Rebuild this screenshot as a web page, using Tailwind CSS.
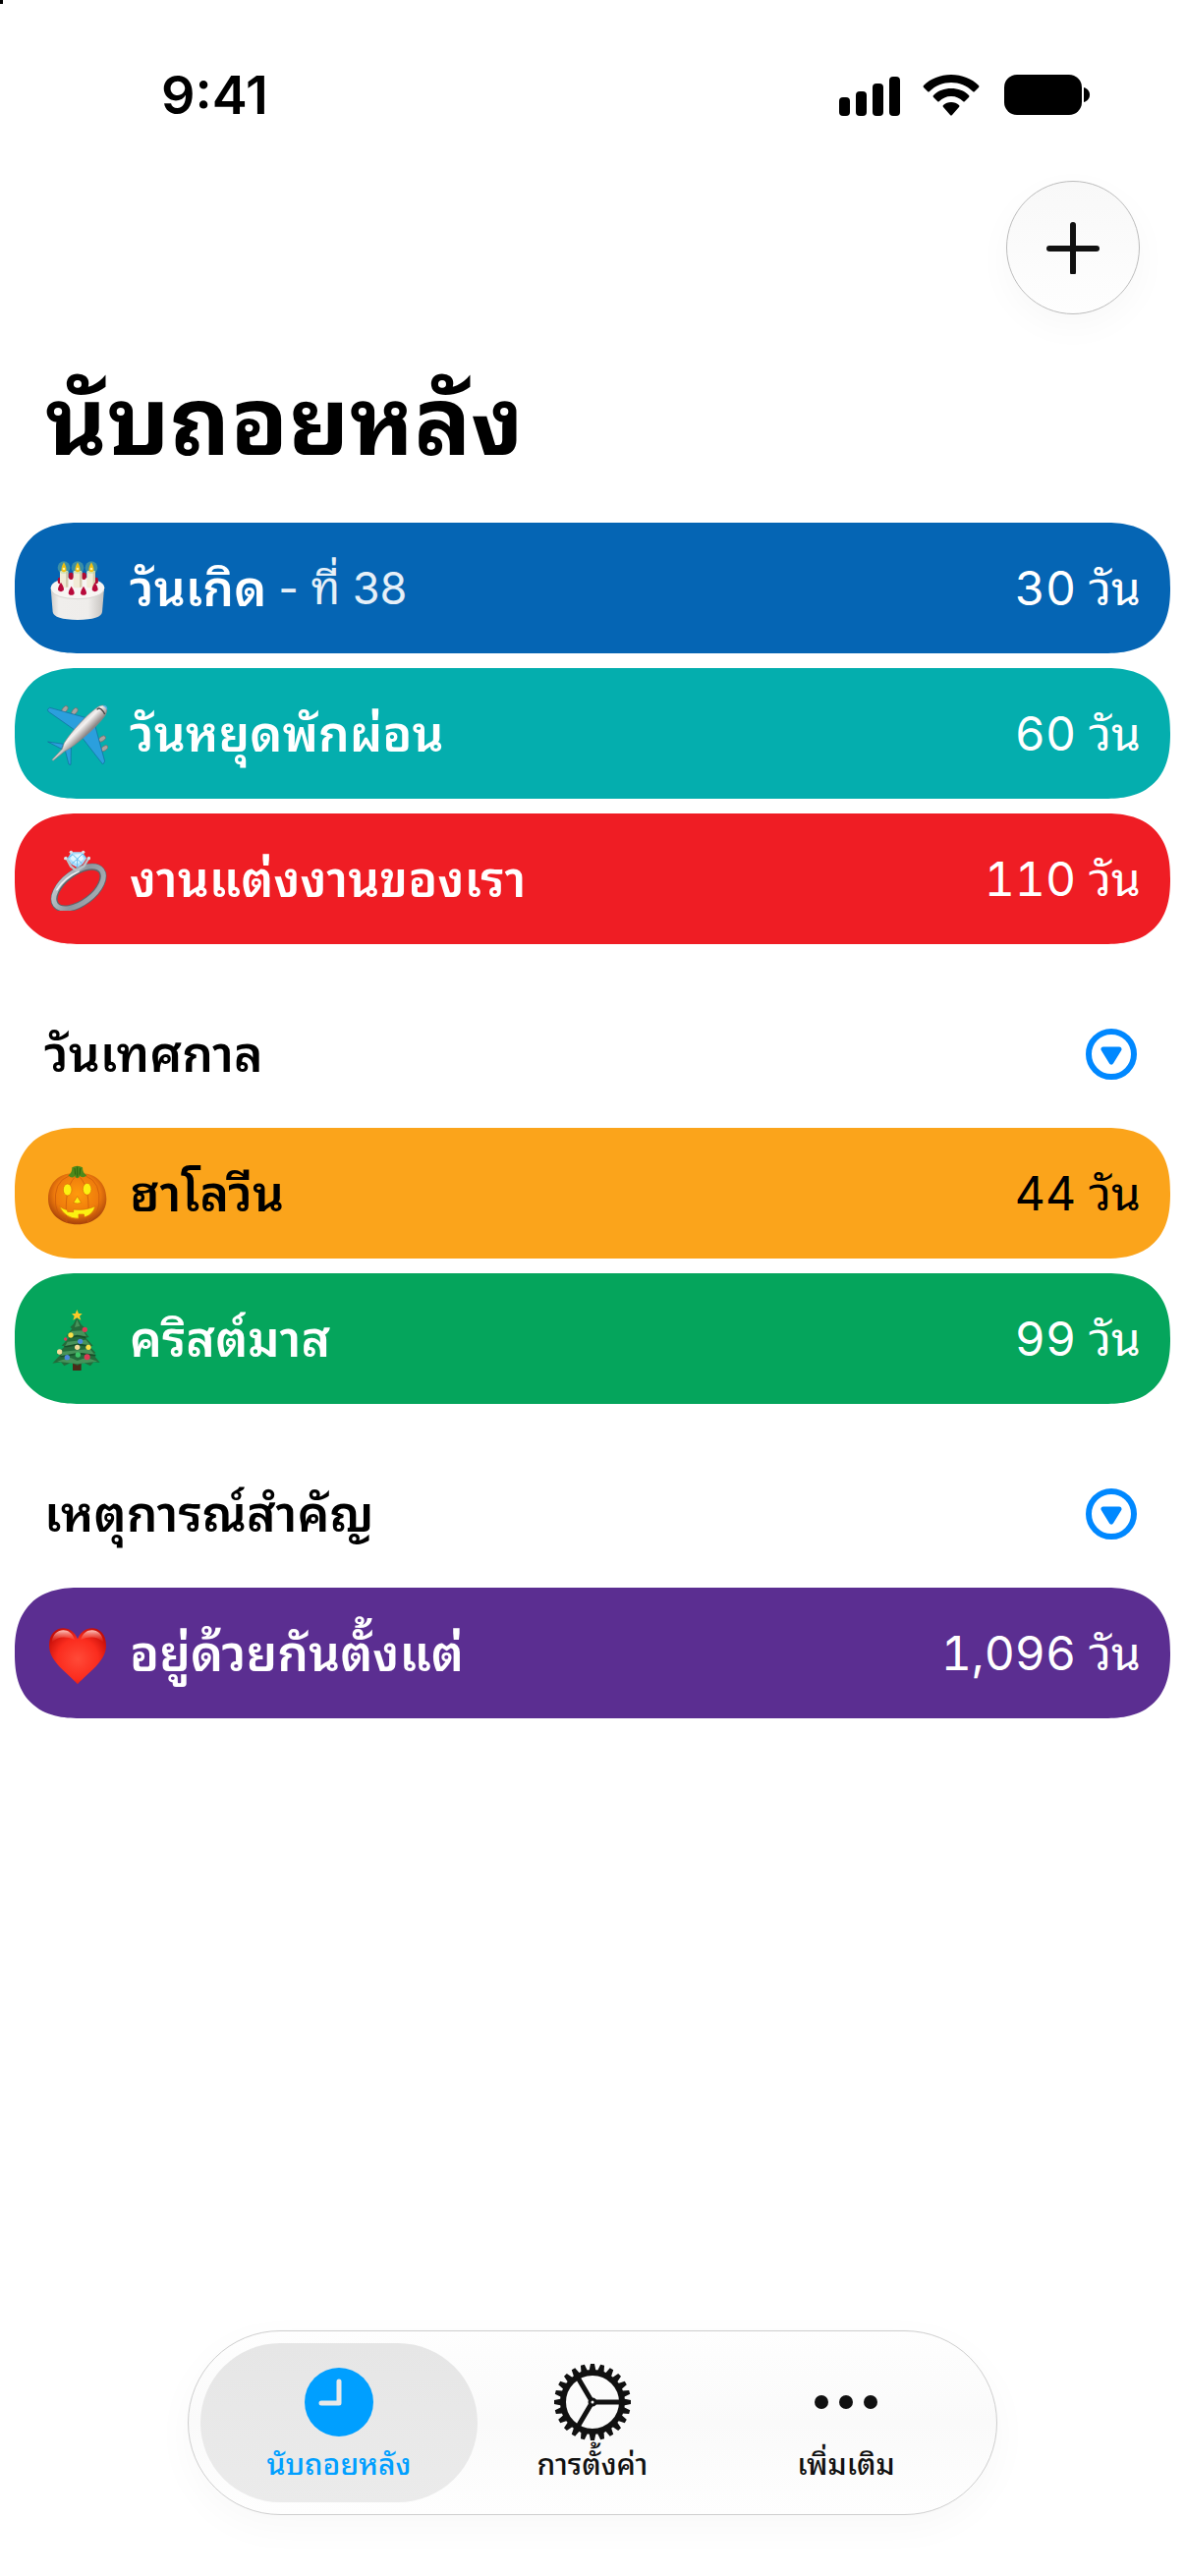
<!DOCTYPE html>
<html lang="th">
<head>
    <meta charset="UTF-8">
    <meta name="viewport" content="width=device-width, initial-scale=1.0">
    <title>นับถอยหลัง</title>
    <script src="https://cdn.jsdelivr.net/npm/@tailwindcss/browser@4"></script>
</head>
<body class="relative flex min-h-screen flex-col bg-white font-['Inter','Noto_Sans_Thai_Looped','Loma',sans-serif] text-black">

    <div class="absolute top-0 left-0 h-1 w-[3px] bg-black"></div>

    <!-- Status bar -->
    <div class="flex h-[184px] items-start justify-between pt-[74px] pr-[96px] pl-[164px]">
        <time class="text-[54px] leading-[46px] font-semibold">9:41</time>
        <div class="flex items-center gap-[23px]">
            <svg class="h-[46px] w-[62px]" viewBox="0 0 62 46" aria-hidden="true">
                <rect x="0" y="25" width="11" height="19" rx="4"/>
                <rect x="17" y="19" width="11" height="25" rx="4"/>
                <rect x="34" y="11" width="11" height="33" rx="4"/>
                <rect x="51" y="4" width="11" height="40" rx="4"/>
            </svg>
            <svg class="h-[46px] w-[58px]" viewBox="0 0 58 46" aria-hidden="true">
                <path d="M29 2C18 2 8 6 1 13Q0 14 1 15L5 19Q6 20 7 19C13 13 21 10 29 10S45 13 51 19Q52 20 53 19L57 15Q58 14 57 13C50 6 40 2 29 2Z"/>
                <path d="M29 16C22 16 16 18 11 23Q10 24 11 25L15 29Q16 30 17 29C20 26 24 24 29 24S38 26 41 29Q42 30 43 29L47 25Q48 24 47 23C42 18 36 16 29 16Z"/>
                <path d="M29 30C26 30 23 31 21 33Q20 34 21 35L28 43Q29 44 30 43L37 35Q38 34 37 33C35 31 32 30 29 30Z"/>
            </svg>
            <svg class="h-[46px] w-[90px]" viewBox="0 0 90 46" aria-hidden="true">
                <rect x="2" y="2" width="79" height="41" rx="13"/>
                <path d="M83 15C91 17 91 28 83 30Z"/>
            </svg>
        </div>
    </div>

    <!-- Header -->
    <header class="flex flex-col px-[46px]">
        <button type="button" aria-label="เพิ่ม" class="flex size-[136px] items-center justify-center self-end rounded-full border border-[#bcbcbc] bg-linear-to-b from-[#f8f8f8] to-[#fefefe] shadow-[0_12px_36px_rgba(0,0,0,0.03)]">
            <svg class="size-[54px]" viewBox="0 0 54 54" fill="none" stroke="#111" stroke-width="6" stroke-linecap="round">
                <path d="M27 4V52M3 28H51"/>
            </svg>
        </button>
        <h1 class="mt-[38px] text-[96px] leading-[140px] font-bold">นับถอยหลัง</h1>
    </header>

    <!-- Countdown lists -->
    <main class="mt-[34px] flex flex-col px-[15px]">
        <ul class="flex flex-col gap-[15px]">
            <li class="flex h-[133px] items-center rounded-[66px] bg-[#0565b4] pr-[30px] pl-[33px] text-white [corner-shape:superellipse(1.3)]">
                <svg class="h-16 w-[62px]" viewBox="0 0 186 192" aria-hidden="true">
                    <defs>
                        <linearGradient id="cakeSide" x1="0" x2="1" y1="0" y2="0">
                            <stop offset="0" stop-color="#cfccc9"/><stop offset=".15" stop-color="#f0eeec"/><stop offset=".7" stop-color="#efedeb"/><stop offset="1" stop-color="#c4c1bd"/>
                        </linearGradient>
                    </defs>
                    <path d="M11 95L17 168Q21 191 93 192Q165 191 168 168L174 95Z" fill="url(#cakeSide)"/>
                    <ellipse cx="93" cy="94" rx="82" ry="33" fill="#f7f5f3"/>
                    <path d="M12 102Q24 127 93 128Q162 127 173 102" fill="none" stroke="#dad7d4" stroke-width="3"/>
                    <g fill="#b00a33">
                        <ellipse cx="38" cy="72" rx="6" ry="10"/><ellipse cx="150" cy="72" rx="6" ry="10"/>
                        <ellipse cx="73" cy="58" rx="8" ry="11"/><ellipse cx="112" cy="58" rx="8" ry="11"/>
                    </g>
                    <g fill="#f1ebd6">
                        <rect x="39" y="42" width="25" height="52" rx="4"/><rect x="80" y="42" width="26" height="52" rx="4"/><rect x="121" y="42" width="26" height="52" rx="4"/>
                    </g>
                    <g fill="#d5cbae">
                        <rect x="57" y="44" width="7" height="48"/><rect x="99" y="44" width="7" height="48"/><rect x="140" y="44" width="7" height="48"/>
                    </g>
                    <g fill="#9fdc8c" opacity=".35">
                        <circle cx="51" cy="32" r="19"/><circle cx="93" cy="32" r="19"/><circle cx="135" cy="32" r="19"/>
                    </g>
                    <g fill="#f0c010">
                        <path d="M51 16Q61 34 58 42Q51 50 44 42Q41 34 51 16Z"/><path d="M93 16Q103 34 100 42Q93 50 86 42Q83 34 93 16Z"/><path d="M135 16Q145 34 142 42Q135 50 128 42Q125 34 135 16Z"/>
                    </g>
                    <g fill="#fff3a0"><circle cx="51" cy="36" r="4"/><circle cx="93" cy="36" r="4"/><circle cx="135" cy="36" r="4"/></g>
                    <g fill="#b8093a">
                        <path d="M42 77Q54 96 50 102Q42 109 34 102Q30 96 42 77Z"/><path d="M74 89Q86 108 82 113Q74 120 66 113Q62 108 74 89Z"/><path d="M111 89Q123 108 119 113Q111 120 103 113Q99 108 111 89Z"/><path d="M146 77Q158 96 154 102Q146 109 138 102Q134 96 146 77Z"/>
                    </g>
                </svg>
                <span class="ml-[22px] text-[50px] leading-[70px] font-semibold">วันเกิด</span>
                <span class="ml-3 text-[45px] leading-[70px] text-white/90">- ที่ 38</span>
                <span class="ml-auto text-[48px] leading-[70px] tabular-nums">30 วัน</span>
            </li>
            <li class="flex h-[133px] items-center rounded-[66px] bg-[#04aeae] pr-[30px] pl-[33px] text-white [corner-shape:superellipse(1.3)]">
                <svg class="h-16 w-[62px]" viewBox="0 0 186 192" aria-hidden="true">
                    <defs>
                        <linearGradient id="hull" gradientUnits="userSpaceOnUse" x1="98" y1="62" x2="126" y2="90">
                            <stop offset="0" stop-color="#d8d5d4"/><stop offset=".35" stop-color="#f4f2f1"/><stop offset="1" stop-color="#8e8786"/>
                        </linearGradient>
                    </defs>
                    <g fill="#aaa3a0" stroke="#716b69" stroke-width="2">
                        <ellipse cx="54" cy="21" rx="12" ry="7" transform="rotate(-50 54 21)"/><ellipse cx="84" cy="27" rx="12" ry="7" transform="rotate(-50 84 27)"/>
                        <ellipse cx="168" cy="111" rx="12" ry="7" transform="rotate(-35 168 111)"/><ellipse cx="175" cy="140" rx="12" ry="7" transform="rotate(-35 175 140)"/>
                    </g>
                    <g fill="#2b9fdd" stroke="#146a9c" stroke-width="2">
                        <path d="M1 22L8 16L116 46L84 84L4 28Z"/>
                        <path d="M146 70L176 180L170 189L104 104Z"/>
                        <path d="M2 120L50 127L44 142Z"/>
                        <path d="M54 142L73 138L72 190L66 189Z"/>
                    </g>
                    <path d="M182 18C184 10 170 6 158 12C130 28 70 92 52 124L46 142L15 175L18 178L52 150L72 138C104 116 162 64 178 38Q183 28 182 18Z" fill="url(#hull)" stroke="#8b8482" stroke-width="2"/>
                    <path d="M152 22Q158 14 166 22T176 36" fill="none" stroke="#444" stroke-width="4"/>
                    <path d="M172 10Q182 12 182 22" fill="none" stroke="#4bb3ea" stroke-width="4"/>
                </svg>
                <span class="ml-[22px] text-[50px] leading-[70px] font-semibold">วันหยุดพักผ่อน</span>
                <span class="ml-auto text-[48px] leading-[70px] tabular-nums">60 วัน</span>
            </li>
            <li class="flex h-[133px] items-center rounded-[66px] bg-[#ef1d24] pr-[30px] pl-[33px] text-white [corner-shape:superellipse(1.3)]">
                <svg class="h-16 w-[62px]" viewBox="0 0 186 192" aria-hidden="true">
                    <defs>
                        <linearGradient id="band" x1="0" x2="1" y1="0" y2="1">
                            <stop offset="0" stop-color="#c9d0d5"/><stop offset=".5" stop-color="#8d979e"/><stop offset="1" stop-color="#a9b2b8"/>
                        </linearGradient>
                    </defs>
                    <ellipse cx="96" cy="122" rx="87" ry="46" transform="rotate(-37 96 122)" fill="none" stroke="#5d666c" stroke-width="21"/>
                    <ellipse cx="96" cy="121" rx="88" ry="47" transform="rotate(-37 96 121)" fill="none" stroke="url(#band)" stroke-width="15"/>
                    <path d="M30 128Q52 92 96 72" fill="none" stroke="#eef2f4" stroke-width="5" stroke-linecap="round"/>
                    <path d="M58 30L72 56L90 70L112 56L128 30" fill="none" stroke="#b9c2c8" stroke-width="7" stroke-linecap="round"/>
                    <path d="M74 13L108 13L120 32L108 50L92 60L74 50L62 32Z" fill="#a8defc"/>
                    <path d="M78 20L104 18L112 34L92 50L70 34Z" fill="#e1f6ff"/>
                    <path d="M62 32L78 20L92 34L108 18L120 32M92 34V60M74 50L92 34L108 50" fill="none" stroke="#5fb9ee" stroke-width="3"/>
                    <g fill="#dde3e7"><circle cx="73" cy="13" r="5"/><circle cx="110" cy="13" r="5"/><circle cx="56" cy="32" r="5"/><circle cx="127" cy="32" r="5"/></g>
                </svg>
                <span class="ml-[22px] text-[50px] leading-[70px] font-semibold">งานแต่งงานของเรา</span>
                <span class="ml-auto text-[48px] leading-[70px] tabular-nums">110 วัน</span>
            </li>
        </ul>

        <section>
            <div class="flex h-[187px] items-center justify-between pt-9 pr-[34px] pl-[30px]">
                <h2 class="text-[50px] leading-[70px] font-semibold">วันเทศกาล</h2>
                <button type="button" aria-label="ย่อ วันเทศกาล">
                    <svg class="size-[52px]" viewBox="0 0 52 52">
                        <circle cx="26" cy="26" r="23" fill="none" stroke="#0088ff" stroke-width="6"/>
                        <path d="M18 21H34L26 34Z" fill="#0088ff" stroke="#0088ff" stroke-width="5" stroke-linejoin="round"/>
                    </svg>
                </button>
            </div>
            <ul class="flex flex-col gap-[15px]">
                <li class="flex h-[133px] items-center rounded-[66px] bg-[#fba41b] pr-[30px] pl-[33px] [corner-shape:superellipse(1.3)]">
                    <svg class="h-16 w-[62px]" viewBox="0 0 186 192" aria-hidden="true">
                        <defs>
                            <radialGradient id="pumpkin" cx=".5" cy=".4" r=".6">
                                <stop offset="0" stop-color="#ff9a0c"/><stop offset=".65" stop-color="#ee7a0c"/><stop offset="1" stop-color="#a5400a"/>
                            </radialGradient>
                        </defs>
                        <path d="M92 38C120 26 180 44 181 112C181 160 140 190 92 190S3 160 3 112C4 44 64 26 92 38Z" fill="url(#pumpkin)"/>
                        <path d="M66 42Q18 60 26 130Q32 166 62 184M118 42Q166 60 158 130Q152 166 122 184M84 46Q50 80 60 186M100 46Q134 80 124 186" fill="none" stroke="#c9570a" stroke-width="3" opacity=".7"/>
                        <path d="M64 40Q76 34 76 16Q92 6 108 16Q108 34 121 40Q110 50 100 42Q92 56 84 42Q76 52 64 40Z" fill="#4e8a1a"/>
                        <path d="M84 18L86 38M92 14V44M101 18L99 38" stroke="#2f6410" stroke-width="3"/>
                        <g fill="#fcf111" stroke="#d96a08" stroke-width="2">
                            <ellipse cx="62" cy="84" rx="13" ry="18"/><ellipse cx="122" cy="82" rx="13" ry="18"/>
                            <path d="M92 104L104 124Q92 128 80 124Z"/>
                            <path d="M37 134Q50 144 62 146L62 151L80 152L80 144Q118 148 147 134Q140 160 114 168L112 159L96 159L96 172Q54 172 37 134Z"/>
                        </g>
                    </svg>
                    <span class="ml-[22px] text-[50px] leading-[70px] font-semibold">ฮาโลวีน</span>
                    <span class="ml-auto text-[48px] leading-[70px] tabular-nums">44 วัน</span>
                </li>
                <li class="flex h-[133px] items-center rounded-[66px] bg-[#05a55c] pr-[30px] pl-[33px] text-white [corner-shape:superellipse(1.3)]">
                    <svg class="h-16 w-[62px]" viewBox="0 0 186 192" aria-hidden="true">
                        <rect x="78" y="158" width="26" height="34" fill="#4a2a18"/>
                        <path d="M91 30L104 52L116 62L108 66L128 90L118 92L140 116L130 118L148 138L140 142L161 168L142 166L132 178L112 168L92 176L72 168L52 178L42 166L16 170L40 144L30 142L54 118L44 116L68 90L58 88L76 64L70 60L80 50Z" fill="#236b3b"/>
                        <path d="M91 36L100 56L84 60ZM74 72L110 70L120 88L92 84L66 92ZM62 104L118 98L134 116L94 110L52 122ZM48 134L130 126L148 146L96 138L40 152ZM30 164L70 152L92 162L120 152L154 164L92 172Z" fill="#46935a"/>
                        <path d="M66 92L92 86L118 92M52 120L94 112L134 118M40 150L96 140L148 146" fill="none" stroke="#174f2a" stroke-width="5"/>
                        <path d="M91 6L96 18L107 18L99 26L103 38L91 31L79 38L83 26L75 18L86 18Z" fill="#fbc928"/>
                        <g fill="#dd3a55"><circle cx="115" cy="67" r="8"/><circle cx="56" cy="96" r="5"/><circle cx="122" cy="151" r="9"/></g>
                        <g fill="#f8e048"><circle cx="72" cy="84" r="8"/><circle cx="126" cy="121" r="8"/></g>
                        <g fill="#4a86dc"><circle cx="101" cy="103" r="8"/><circle cx="61" cy="152" r="8"/></g>
                        <g fill="#f2dc9a"><circle cx="92" cy="121" r="8"/><circle cx="38" cy="135" r="8"/></g>
                        <circle cx="94" cy="144" r="8" fill="#3cc266"/>
                    </svg>
                    <span class="ml-[22px] text-[50px] leading-[70px] font-semibold">คริสต์มาส</span>
                    <span class="ml-auto text-[48px] leading-[70px] tabular-nums">99 วัน</span>
                </li>
            </ul>
        </section>

        <section>
            <div class="flex h-[187px] items-center justify-between pt-9 pr-[34px] pl-[30px]">
                <h2 class="text-[50px] leading-[70px] font-semibold">เหตุการณ์สำคัญ</h2>
                <button type="button" aria-label="ย่อ เหตุการณ์สำคัญ">
                    <svg class="size-[52px]" viewBox="0 0 52 52">
                        <circle cx="26" cy="26" r="23" fill="none" stroke="#0088ff" stroke-width="6"/>
                        <path d="M18 21H34L26 34Z" fill="#0088ff" stroke="#0088ff" stroke-width="5" stroke-linejoin="round"/>
                    </svg>
                </button>
            </div>
            <ul class="flex flex-col gap-[15px]">
                <li class="flex h-[133px] items-center rounded-[66px] bg-[#5b2e91] pr-[30px] pl-[33px] text-white [corner-shape:superellipse(1.3)]">
                    <svg class="h-16 w-[62px]" viewBox="0 0 186 192" aria-hidden="true">
                        <defs>
                            <radialGradient id="heart" cx=".5" cy=".55" r=".6">
                                <stop offset="0" stop-color="#ff4a38"/><stop offset=".6" stop-color="#fb2c1e"/><stop offset="1" stop-color="#c40d08"/>
                            </radialGradient>
                            <linearGradient id="heartShine" x1="0" x2="0" y1="0" y2="1">
                                <stop offset="0" stop-color="#ffc8c0"/><stop offset="1" stop-color="#ff5a48" stop-opacity="0"/>
                            </linearGradient>
                        </defs>
                        <path d="M93 52C76 4 6 6 6 72C6 122 62 154 93 190C124 154 180 122 180 72C180 6 110 4 93 52Z" fill="url(#heart)"/>
                        <path d="M84 54C72 12 18 16 14 62Q40 36 84 54ZM102 54C114 12 168 16 172 62Q146 36 102 54Z" fill="url(#heartShine)"/>
                    </svg>
                    <span class="ml-[22px] text-[50px] leading-[70px] font-semibold">อยู่ด้วยกันตั้งแต่</span>
                    <span class="ml-auto text-[48px] leading-[70px] tabular-nums">1,096 วัน</span>
                </li>
            </ul>
        </section>
    </main>

    <!-- Tab bar -->
    <nav class="mx-auto mt-auto mb-[62px] flex rounded-full border border-[#cecece] bg-linear-to-b from-[#fefefe] via-[#fafafa] to-[#fefefe] px-6 py-3 shadow-[0_12px_40px_rgba(0,0,0,0.03)]">
        <a href="#" aria-current="page" class="-mx-3 flex h-[162px] w-[282px] flex-col items-center rounded-full bg-linear-to-b from-[#e6e6e6] to-[#ebebeb] pt-5 text-[#009fff]">
            <svg class="size-20" viewBox="0 0 80 80" aria-hidden="true">
                <circle cx="40" cy="40" r="35" fill="#009fff"/>
                <path d="M40 19V41H22" fill="none" stroke="#e9e9e9" stroke-width="5" stroke-linecap="round" stroke-linejoin="round"/>
            </svg>
            <span class="text-[30px] leading-[46px] font-medium">นับถอยหลัง</span>
        </a>
        <a href="#" class="-mx-3 flex h-[162px] w-[282px] flex-col items-center pt-5 text-[#111]">
            <svg class="size-20" viewBox="0 0 80 80" fill="none" stroke="#111" aria-hidden="true">
                <defs>
                    <path id="cogs" d="M36 11L38 1H42L44 11ZM36 69L38 79H42L44 69Z" fill="#111" stroke="none"/>
                </defs>
                <circle cx="40" cy="40" r="30" stroke-width="6"/>
                <use href="#cogs"/>
                <use href="#cogs" transform="rotate(15 40 40)"/>
                <use href="#cogs" transform="rotate(30 40 40)"/>
                <use href="#cogs" transform="rotate(45 40 40)"/>
                <use href="#cogs" transform="rotate(60 40 40)"/>
                <use href="#cogs" transform="rotate(75 40 40)"/>
                <use href="#cogs" transform="rotate(90 40 40)"/>
                <use href="#cogs" transform="rotate(105 40 40)"/>
                <use href="#cogs" transform="rotate(120 40 40)"/>
                <use href="#cogs" transform="rotate(135 40 40)"/>
                <use href="#cogs" transform="rotate(150 40 40)"/>
                <use href="#cogs" transform="rotate(165 40 40)"/>
                <path d="M43 40H69M38 37L25 15M38 43L25 65" stroke-width="5"/>
                <circle cx="40" cy="40" r="3" stroke-width="3"/>
            </svg>
            <span class="text-[30px] leading-[46px] font-medium">การตั้งค่า</span>
        </a>
        <a href="#" class="-mx-3 flex h-[162px] w-[282px] flex-col items-center pt-5 text-[#111]">
            <svg class="size-20" viewBox="0 0 80 80" fill="#111" aria-hidden="true">
                <circle cx="15" cy="40" r="7"/>
                <circle cx="40" cy="40" r="7"/>
                <circle cx="65" cy="40" r="7"/>
            </svg>
            <span class="text-[30px] leading-[46px] font-medium">เพิ่มเติม</span>
        </a>
    </nav>

</body>
</html>
